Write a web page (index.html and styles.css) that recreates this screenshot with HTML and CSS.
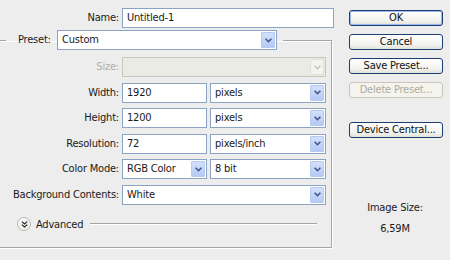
FILE: index.html
```html
<!DOCTYPE html>
<html>
<head>
<meta charset="utf-8">
<link rel="stylesheet" href="styles.css">
</head>
<body>
<div class="dialog">
  <div class="main">
    <div class="name-row">
      <span class="lbl name-lbl">Name:</span>
      <div class="field name-field">Untitled-1</div>
    </div>
    <fieldset class="group">
      <legend class="legend">
        <span class="lbl">Preset:</span>
        <div class="field select preset-select"><span class="val">Custom</span><span class="arrow"><svg width="7" height="5" viewBox="0 0 7 5"><path d="M0.6 0.8 L3.5 3.7 L6.4 0.8" stroke="#3d5486" stroke-width="1.6" fill="none"/></svg></span></div>
      </legend>
      <div class="grid">
        <span class="lbl disabled">Size:</span>
        <div class="field select wide is-disabled"><span class="val"></span><span class="arrow"><svg width="7" height="5" viewBox="0 0 7 5"><path d="M0.6 0.8 L3.5 3.7 L6.4 0.8" stroke="#c4c3bb" stroke-width="1.4" fill="none"/></svg></span></div>

        <span class="lbl">Width:</span>
        <div class="field">1920</div>
        <div class="field select"><span class="val">pixels</span><span class="arrow"><svg width="7" height="5" viewBox="0 0 7 5"><path d="M0.6 0.8 L3.5 3.7 L6.4 0.8" stroke="#3d5486" stroke-width="1.6" fill="none"/></svg></span></div>

        <span class="lbl">Height:</span>
        <div class="field">1200</div>
        <div class="field select"><span class="val">pixels</span><span class="arrow"><svg width="7" height="5" viewBox="0 0 7 5"><path d="M0.6 0.8 L3.5 3.7 L6.4 0.8" stroke="#3d5486" stroke-width="1.6" fill="none"/></svg></span></div>

        <span class="lbl">Resolution:</span>
        <div class="field">72</div>
        <div class="field select"><span class="val">pixels/inch</span><span class="arrow"><svg width="7" height="5" viewBox="0 0 7 5"><path d="M0.6 0.8 L3.5 3.7 L6.4 0.8" stroke="#3d5486" stroke-width="1.6" fill="none"/></svg></span></div>

        <span class="lbl">Color Mode:</span>
        <div class="field select"><span class="val">RGB Color</span><span class="arrow"><svg width="7" height="5" viewBox="0 0 7 5"><path d="M0.6 0.8 L3.5 3.7 L6.4 0.8" stroke="#3d5486" stroke-width="1.6" fill="none"/></svg></span></div>
        <div class="field select"><span class="val">8 bit</span><span class="arrow"><svg width="7" height="5" viewBox="0 0 7 5"><path d="M0.6 0.8 L3.5 3.7 L6.4 0.8" stroke="#3d5486" stroke-width="1.6" fill="none"/></svg></span></div>

        <span class="lbl">Background Contents:</span>
        <div class="field select wide"><span class="val">White</span><span class="arrow"><svg width="7" height="5" viewBox="0 0 7 5"><path d="M0.6 0.8 L3.5 3.7 L6.4 0.8" stroke="#3d5486" stroke-width="1.6" fill="none"/></svg></span></div>
      </div>
      <div class="advanced">
        <span class="adv-icon"><svg width="7" height="7" viewBox="0 0 7 7"><path d="M0.8 0.6 L3.5 3 L6.2 0.6 M0.8 3.6 L3.5 6 L6.2 3.6" stroke="#222" stroke-width="1.2" fill="none"/></svg></span>
        <span class="adv-text">Advanced</span>
        <span class="adv-line"></span>
      </div>
    </fieldset>
  </div>
  <div class="side">
    <div class="btn default">OK</div>
    <div class="btn">Cancel</div>
    <div class="btn">Save Preset...</div>
    <div class="btn btn-disabled">Delete Preset...</div>
    <div class="btn device">Device Central...</div>
    <div class="imgsize">
      <div>Image Size:</div>
      <div class="imgsize-val">6,59M</div>
    </div>
  </div>
</div>
</body>
</html>
```

FILE: styles.css
```css
html, body {
  margin: 0;
  padding: 0;
}
body {
  width: 450px;
  height: 260px;
  overflow: hidden;
  background: #ededed;
  font-family: "DejaVu Sans Condensed", "DejaVu Sans", sans-serif;
  font-size: 11px;
  letter-spacing: -0.2px;
  color: #1a1a1a;
}
.dialog {
  display: flex;
  height: 260px;
}
.main {
  width: 340px;
  flex: none;
}
.name-row {
  display: flex;
  align-items: center;
  padding-top: 8px;
}
.name-lbl {
  width: 119px;
  margin-right: 3px;
  text-align: right;
}
.lbl {
  white-space: nowrap;
  line-height: 20px;
}
.lbl.disabled {
  color: #b0aea4;
}
.field {
  box-sizing: border-box;
  height: 20px;
  border: 1px solid #8aa4c2;
  background: #fff;
  padding: 0 4px;
  line-height: 18px;
  white-space: nowrap;
  overflow: hidden;
}
.name-field {
  width: 212px;
}
.select {
  display: flex;
  align-items: stretch;
  padding: 0 1px 0 4px;
}
.select .val {
  flex: 1;
  overflow: hidden;
}
.arrow {
  flex: none;
  width: 14px;
  margin: 1px 0;
  box-sizing: border-box;
  border: 1px solid #b7c9f1;
  border-radius: 1px;
  background: linear-gradient(#d4e0fb, #b6c9f5);
  display: flex;
  align-items: center;
  justify-content: center;
}
.is-disabled {
  border-color: #c9c7ba;
  background: #ebebe6;
}
.is-disabled .arrow {
  border-color: #e0dfd8;
  background: #f3f3ef;
}
.group {
  margin: 2px 0 0 -10px;
  width: 342px;
  box-sizing: border-box;
  padding: 0 0 16px 0;
  border: 1px solid #a6a69c;
  box-shadow: 1px 1px 0 #fff, inset 1px 1px 0 #fff;
  min-width: 0;
}
.legend {
  margin-left: 15px;
  padding: 0 6px 0 12px;
  display: flex;
  align-items: center;
}
.legend .lbl {
  width: 39px;
}
.preset-select {
  width: 220px;
}
.grid {
  margin-top: 7px;
  display: grid;
  grid-template-columns: 128px 85px 116px;
  column-gap: 3px;
  grid-auto-rows: 20px;
  row-gap: 5.5px;
}
.grid .lbl {
  text-align: right;
}
.wide {
  grid-column: 2 / 4;
}
.advanced {
  display: flex;
  align-items: center;
  height: 13px;
  margin-top: 13px;
  padding-left: 26px;
  padding-right: 14px;
}
.adv-icon {
  box-sizing: border-box;
  width: 14px;
  height: 14px;
  border: 1px solid #b9b9b4;
  border-radius: 50%;
  background: radial-gradient(circle at 40% 35%, #ffffff, #e4e4e0);
  display: flex;
  align-items: center;
  justify-content: center;
  flex: none;
}
.adv-text {
  margin-left: 5px;
}
.adv-line {
  flex: 1;
  margin-left: 7px;
  height: 0;
  border-top: 1px solid #a5a5a0;
  border-bottom: 1px solid #fff;
}
.side {
  flex: none;
  width: 110px;
  padding-top: 10px;
  display: flex;
  flex-direction: column;
  align-items: flex-start;
}
.btn {
  box-sizing: border-box;
  margin-left: 9px;
  width: 94px;
  height: 16px;
  margin-bottom: 8px;
  border: 1px solid #1c3f73;
  border-radius: 3px;
  background: linear-gradient(#ffffff, #f2f2ee 70%, #e3e2da);
  text-align: center;
  line-height: 14px;
  color: #111;
}
.btn.default {
  box-shadow: inset 0 0 0 1px #9bb8ea;
}
.btn-disabled {
  border-color: #c9c7ba;
  background: #f4f3ee;
  color: #aeac9f;
}
.device {
  margin-top: 16px;
}
.imgsize {
  margin-top: 51px;
  width: 110px;
  text-align: center;
  line-height: 21px;
}
```
